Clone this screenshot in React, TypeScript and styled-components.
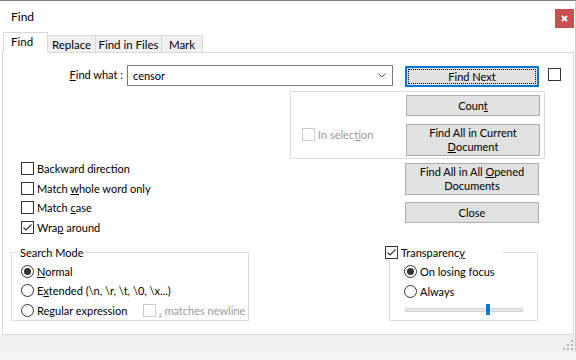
import React from 'react'
import styled, { createGlobalStyle } from 'styled-components'

const GlobalStyle = createGlobalStyle`
	html, body {
		margin: 0;
		padding: 0;
		background: #f4f4f4;
	}
	body {
		font-family: Lato, "Liberation Sans", sans-serif;
		font-size: 11px;
		color: #000;
	}
	* {
		box-sizing: border-box;
	}
	u {
		text-underline-offset: 1px;
	}
`

const Window = styled.div`
	width: 576px;
	height: 352px;
	background: #fff;
	border-top: 1px solid #7c7c7c;
	border-right: 1px solid #cfcfcf;
	display: flex;
	flex-direction: column;
`

const TitleBar = styled.div`
	height: 31px;
	display: flex;
	align-items: flex-start;
	justify-content: space-between;
	padding-left: 11px;
`

const Title = styled.div`
	font-size: 12px;
	line-height: 31px;
`

const CloseButton = styled.div`
	width: 19px;
	height: 19px;
	margin: 8px 1px 0 0;
	background: #c75050;
	display: flex;
	align-items: center;
	justify-content: center;
`

const TabStrip = styled.div`
	height: 21px;
	display: flex;
	align-items: flex-end;
	padding-left: 3px;
	margin-bottom: -1px;
	position: relative;
	z-index: 1;
`

const Tab = styled.div<{ $active?: boolean; $w: number }>`
	width: ${(p) => p.$w}px;
	height: ${(p) => (p.$active ? 21 : 18)}px;
	margin-left: -1px;
	border: 1px solid #d9d9d9;
	border-bottom: ${(p) => (p.$active ? 'none' : '1px solid #d9d9d9')};
	background: ${(p) => (p.$active ? '#fff' : '#f0f0f0')};
	display: flex;
	align-items: center;
	justify-content: ${(p) => (p.$active ? 'flex-start' : 'center')};
	padding-left: ${(p) => (p.$active ? 7 : 0)}px;
	padding-bottom: ${(p) => (p.$active ? 3 : 0)}px;
	font-size: 11.5px;
	&:first-child {
		margin-left: 0;
	}
`

const Page = styled.div`
	flex: 1;
	margin: 0 1px 0 2px;
	border: 1px solid #d9d9d9;
	display: flex;
	flex-direction: column;
`

const TopRow = styled.div`
	display: flex;
	align-items: flex-start;
	margin-top: 12px;
	height: 22px;
`

const FieldLabel = styled.div`
	width: 124px;
	padding-right: 4px;
	text-align: right;
	line-height: 20px;
`

const Combo = styled.div`
	width: 266px;
	height: 21px;
	border: 1px solid #7a7a7a;
	display: flex;
	align-items: center;
	justify-content: space-between;
	padding: 0 6px 0 5px;
`

const Button = styled.div<{ $h?: number; $focused?: boolean }>`
	width: 134px;
	height: ${(p) => p.$h ?? 21}px;
	flex-shrink: 0;
	background: #e1e1e1;
	border: ${(p) => (p.$focused ? '2px solid #0078d7' : '1px solid #adadad')};
	outline: ${(p) => (p.$focused ? '1px dotted #000' : 'none')};
	outline-offset: -4px;
	display: flex;
	align-items: center;
	justify-content: center;
	text-align: center;
	line-height: 14px;
`

const TopCheck = styled.div`
	margin: 3px 0 0 9px;
`

const Middle = styled.div`
	display: flex;
`

const OptionsColumn = styled.div`
	width: 287px;
	padding: 72px 0 0 18px;
	display: flex;
	flex-direction: column;
`

const ActionsColumn = styled.div`
	display: flex;
	flex-direction: column;
	padding-top: 4px;
`

const SelectionGroup = styled.div`
	width: 255px;
	height: 68px;
	border: 1px solid #dcdcdc;
	display: flex;
	justify-content: space-between;
	padding: 3px 4px 0 11px;
`

const ButtonStack = styled.div<{ $gap: number; $indent?: number; $top?: number }>`
	display: flex;
	flex-direction: column;
	gap: ${(p) => p.$gap}px;
	margin-left: ${(p) => p.$indent ?? 0}px;
	margin-top: ${(p) => p.$top ?? 0}px;
`

const Row = styled.div<{ $h?: number; $top?: number; $disabled?: boolean }>`
	height: ${(p) => p.$h ?? 19.5}px;
	margin-top: ${(p) => p.$top ?? 0}px;
	display: flex;
	align-items: center;
	gap: 3px;
	color: ${(p) => (p.$disabled ? '#9a9a9a' : '#000')};
	white-space: nowrap;
`

const Box = styled.div<{ $disabled?: boolean }>`
	width: 13px;
	height: 13px;
	flex-shrink: 0;
	border: 1px solid ${(p) => (p.$disabled ? '#cccccc' : '#333')};
	background: #fff;
	display: flex;
	align-items: center;
	justify-content: center;
`

const Circle = styled.div`
	width: 13px;
	height: 13px;
	flex-shrink: 0;
	border: 1px solid #333;
	border-radius: 50%;
	background: #fff;
	display: flex;
	align-items: center;
	justify-content: center;
`

const Dot = styled.div`
	width: 7px;
	height: 7px;
	border-radius: 50%;
	background: #333;
`

const BottomRow = styled.div`
	display: flex;
	margin-top: 15px;
	padding-left: 8px;
`

const Group = styled.div<{ $w: number; $left?: number; $pad: number }>`
	position: relative;
	width: ${(p) => p.$w}px;
	height: 69px;
	margin-left: ${(p) => p.$left ?? 0}px;
	border: 1px solid #dcdcdc;
	padding: 9px 0 0 ${(p) => p.$pad}px;
	display: flex;
	flex-direction: column;
`

const GroupLabel = styled.div<{ $left: number; $w?: number }>`
	position: absolute;
	top: -8px;
	left: ${(p) => p.$left}px;
	width: ${(p) => (p.$w ? `${p.$w}px` : 'auto')};
	padding: 0 2px;
	line-height: 15px;
	height: 15px;
	background: #fff;
	display: flex;
	align-items: center;
	gap: 3px;
`

const RegexLine = styled.div`
	display: flex;
	align-items: center;
`

const RegexLabel = styled.div`
	width: 122px;
`

const Slider = styled.div`
	position: relative;
	width: 118px;
	height: 11px;
	margin: 3px 0 0 1px;
	display: flex;
	align-items: center;
`

const Track = styled.div`
	width: 100%;
	height: 4px;
	background: #e7e7e7;
	border: 1px solid #d6d6d6;
`

const Thumb = styled.div`
	position: absolute;
	top: 0;
	width: 4px;
	height: 11px;
	background: #0078d7;
`

const Footer = styled.div`
	height: 17px;
	background: #f0f0f0;
	display: flex;
	justify-content: flex-end;
	align-items: flex-end;
	padding: 0 1px 1px 0;
`

const Check = ({ checked, disabled }: { checked?: boolean; disabled?: boolean }) => (
	<Box $disabled={disabled}>
		{checked && (
			<svg width="11" height="11" viewBox="0 0 11 11">
				<polyline points="1.5,5.5 4,8 9.5,2.5" fill="none" stroke="#333" strokeWidth="1.1" />
			</svg>
		)}
	</Box>
)

const Radio = ({ checked }: { checked?: boolean }) => <Circle>{checked && <Dot />}</Circle>

const options = [
	{ label: <>Backward direction</>, checked: false },
	{ label: <>Match <u>w</u>hole word only</>, checked: false },
	{ label: <>Match <u>c</u>ase</>, checked: false },
	{ label: <>Wra<u>p</u> around</>, checked: true },
]

// transparency level, 0..1
const sliderValue = 0.685

const App: React.FC = () => {
	return (
		<>
			<GlobalStyle />
			<Window>
				<TitleBar>
					<Title>Find</Title>
					<CloseButton>
						<svg width="7" height="7" viewBox="0 0 7 7">
							<path d="M1 1L6 6M6 1L1 6" stroke="#fff" strokeWidth="1.8" />
						</svg>
					</CloseButton>
				</TitleBar>
				<TabStrip>
					<Tab $active $w={45}>Find</Tab>
					<Tab $w={49}>Replace</Tab>
					<Tab $w={67}>Find in Files</Tab>
					<Tab $w={42}>Mark</Tab>
				</TabStrip>
				<Page>
					<TopRow>
						<FieldLabel>
							<u>F</u>ind what :
						</FieldLabel>
						<Combo>
							<span>censor</span>
							<svg width="8" height="5" viewBox="0 0 8 5">
								<polyline points="0.5,0.5 4,4 7.5,0.5" fill="none" stroke="#555" strokeWidth="1" />
							</svg>
						</Combo>
						<Button $focused style={{ marginLeft: 12, marginTop: 1 }}>
							Find Next
						</Button>
						<TopCheck>
							<Check />
						</TopCheck>
					</TopRow>
					<Middle>
						<OptionsColumn>
							{options.map((o, i) => (
								<Row key={i}>
									<Check checked={o.checked} />
									<span>{o.label}</span>
								</Row>
							))}
						</OptionsColumn>
						<ActionsColumn>
							<SelectionGroup>
								<Row $h={20} $top={29} $disabled>
									<Check disabled />
									<span>
										In selec<u>t</u>ion
									</span>
								</Row>
								<ButtonStack $gap={8}>
									<Button>
										<span>
											Coun<u>t</u>
										</span>
									</Button>
									<Button $h={32}>
										<span>
											Find All in Current
											<br />
											<u>D</u>ocument
										</span>
									</Button>
								</ButtonStack>
							</SelectionGroup>
							<ButtonStack $gap={7} $indent={115} $top={4}>
								<Button $h={32}>
									<span>
										Find All in All <u>O</u>pened
										<br />
										Documents
									</span>
								</Button>
								<Button>Close</Button>
							</ButtonStack>
						</ActionsColumn>
					</Middle>
					<BottomRow>
						<Group $w={238} $pad={9}>
							<GroupLabel $left={6}>Search Mode</GroupLabel>
							<Row>
								<Radio checked />
								<span>
									<u>N</u>ormal
								</span>
							</Row>
							<Row>
								<Radio />
								<span>
									E<u>x</u>tended (\n, \r, \t, \0, \x...)
								</span>
							</Row>
							<RegexLine>
								<RegexLabel>
									<Row>
										<Radio />
										<span>
											Re<u>g</u>ular expression
										</span>
									</Row>
								</RegexLabel>
								<Row $disabled>
									<Check disabled />
									<span>
										<u>.</u> matches newline
									</span>
								</Row>
							</RegexLine>
						</Group>
						<Group $w={149} $left={140} $pad={14}>
							<GroupLabel $left={-7} $w={120}>
								<Check checked />
								<span>
									Transparenc<u>y</u>
								</span>
							</GroupLabel>
							<Row>
								<Radio checked />
								<span>On losing focus</span>
							</Row>
							<Row>
								<Radio />
								<span>Always</span>
							</Row>
							<Slider>
								<Track />
								<Thumb style={{ left: `${sliderValue * 100}%` }} />
							</Slider>
						</Group>
					</BottomRow>
				</Page>
				<Footer>
					<svg width="12" height="12" viewBox="0 0 12 12">
						{[
							[9, 1],
							[9, 5],
							[5, 5],
							[9, 9],
							[5, 9],
							[1, 9],
						].map(([x, y], i) => (
							<rect key={i} x={x} y={y} width="2" height="2" fill="#b5b5b5" />
						))}
					</svg>
				</Footer>
			</Window>
		</>
	)
}

export default App
